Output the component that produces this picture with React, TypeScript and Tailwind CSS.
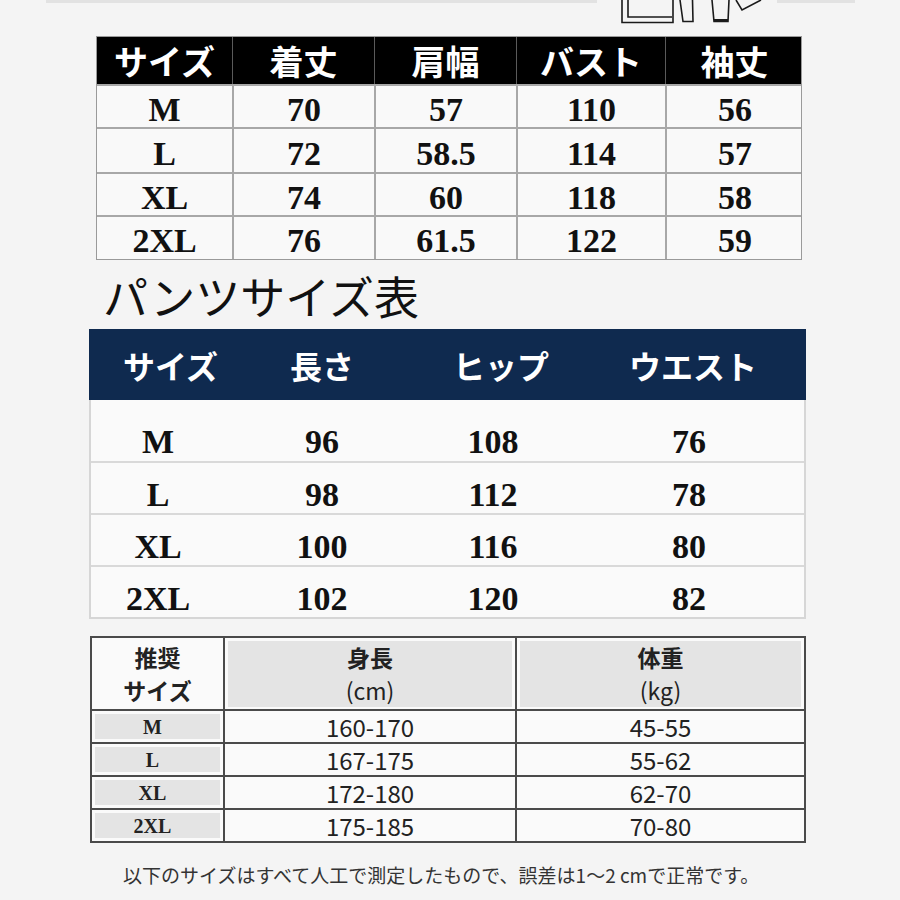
import type { FC } from "react";

const gothic = { fontFamily: '"Noto Sans CJK JP", "Noto Sans", sans-serif' };
const serif = { fontFamily: '"Liberation Serif", "DejaVu Serif", serif' };

const topHeaders = ["サイズ", "着丈", "肩幅", "バスト", "袖丈"];
const topRows = [
	["M", "70", "57", "110", "56"],
	["L", "72", "58.5", "114", "57"],
	["XL", "74", "60", "118", "58"],
	["2XL", "76", "61.5", "122", "59"],
];
const topHeights = ["h-[43px]", "h-[45px]", "h-[43px]", "h-[44px]"];

const pantsHeaders = ["サイズ", "長さ", "ヒップ", "ウエスト"];
const pantsRows = [
	["M", "96", "108", "76"],
	["L", "98", "112", "78"],
	["XL", "100", "116", "80"],
	["2XL", "102", "120", "82"],
];

const recRows = [
	["M", "160-170", "45-55"],
	["L", "167-175", "55-62"],
	["XL", "172-180", "62-70"],
	["2XL", "175-185", "70-80"],
];

const ClothesIcon: FC = () => (
	<svg width="180" height="36" viewBox="0 0 180 36" fill="none" stroke="#1a1a1a" strokeWidth="1.6">
		<path d="M25 0 V22.5 H76 V0" />
		<path d="M31 0 V17 H75" />
		<path d="M83 0 L86 21.5 H96 L95.5 0" />
		<path d="M115 0 L117 21.5 H131 L132 0" />
		<path d="M117 20.5 H131" strokeWidth="3" />
		<path d="M139 0 L145 10 L164 0" />
	</svg>
);

const TopTable: FC = () => (
	<div className="ml-[96px] w-[706px] border border-[#9a9a9a] bg-[#f9f9f9]">
		<div className="grid grid-cols-[135px_142px_142px_149px_138px] h-[47px] bg-black">
			{topHeaders.map((h, i) => (
				<div
					key={h}
					className={`flex items-center justify-center text-white text-[34px] font-bold leading-none ${i > 0 ? "border-l border-[#5a5a5a]" : ""}`}
					style={gothic}
				>
					{h}
				</div>
			))}
		</div>
		{topRows.map((row, r) => (
			<div
				key={row[0]}
				className={`grid grid-cols-[135px_142px_142px_149px_138px] border-t-2 border-[#a8a8a8] ${topHeights[r]}`}
			>
				{row.map((c, i) => (
					<div
						key={i}
						className={`flex items-center justify-center pt-[6px] text-[34px] font-bold leading-none text-[#111] ${i > 0 ? "border-l-2 border-[#a8a8a8]" : ""}`}
						style={serif}
					>
						{c}
					</div>
				))}
			</div>
		))}
	</div>
);

const PantsTable: FC = () => (
	<div className="ml-[89px] w-[717px]">
		<div className="grid grid-cols-[201px_163px_176px_1fr] h-[71px] bg-[#0f2a4f] items-center">
			{pantsHeaders.map((h, i) => (
				<div
					key={h}
					className={`text-white text-[32px] font-bold leading-none ${i === 0 ? "pl-[34px]" : ""}`}
					style={gothic}
				>
					{h}
				</div>
			))}
		</div>
		<div className="border-x-2 border-b-2 border-[#d6d6d6] bg-[#fafafa]">
			{pantsRows.map((row, r) => (
				<div
					key={row[0]}
					className={`grid grid-cols-[134px_194px_148px_1fr] ${r === 0 ? "h-[61px] pt-[23px]" : "h-[52px] pt-[14px] border-t-2 border-[#d9d9d9]"}`}
				>
					{row.map((c, i) => (
						<div
							key={i}
							className={`flex items-center justify-center text-[34px] font-bold leading-none text-[#111] ${i === 3 ? "pl-[7px]" : ""}`}
							style={serif}
						>
							{c}
						</div>
					))}
				</div>
			))}
		</div>
	</div>
);

const RecTable: FC = () => (
	<div className="mt-[17px] ml-[90px] w-[716px] border-2 border-[#4a4a4a] bg-[#fafafa]">
		<div className="grid grid-cols-[131px_292px_1fr] h-[71px]">
			<div className="flex flex-col items-center justify-center text-[23px] font-bold leading-[33px] text-[#222]" style={gothic}>
				<span>推奨</span>
				<span>サイズ</span>
			</div>
			<div className="border-l-2 border-[#4a4a4a] p-[3px]">
				<div className="h-full bg-[#e4e4e4] flex flex-col items-center justify-center text-[23px] leading-[33px] text-[#222]" style={gothic}>
					<span className="font-bold">身長</span>
					<span>(cm)</span>
				</div>
			</div>
			<div className="border-l-2 border-[#4a4a4a] p-[3px]">
				<div className="h-full bg-[#e4e4e4] flex flex-col items-center justify-center text-[23px] leading-[33px] text-[#222]" style={gothic}>
					<span className="font-bold">体重</span>
					<span>(kg)</span>
				</div>
			</div>
		</div>
		{recRows.map((row) => (
			<div key={row[0]} className="grid grid-cols-[131px_292px_1fr] h-[33px] border-t-2 border-[#4a4a4a]">
				<div className="p-[3px]">
					<div className="h-full bg-[#e4e4e4] flex items-center justify-center pr-[10px] text-[20px] font-bold leading-none text-[#222]" style={serif}>
						{row[0]}
					</div>
				</div>
				<div className="border-l-2 border-[#4a4a4a] flex items-center justify-center text-[24px] leading-none text-[#222]" style={gothic}>
					{row[1]}
				</div>
				<div className="border-l-2 border-[#4a4a4a] flex items-center justify-center text-[24px] leading-none text-[#222]" style={gothic}>
					{row[2]}
				</div>
			</div>
		))}
	</div>
);

export default function App() {
	return (
		<div className="w-[900px] h-[900px] overflow-hidden bg-[#f4f4f4]">
			<div className="flex items-start h-[36px]">
				<div className="w-[46px]" />
				<div className="w-[551px] h-[3px] bg-[#e2e2e2]" />
				<ClothesIcon />
				<div className="w-[78px] h-[3px] bg-[#e2e2e2]" />
			</div>
			<TopTable />
			<div className="h-[69px] flex items-center pl-[103px] pt-[2px] text-[45px] leading-none text-[#111]" style={gothic}>
				パンツサイズ表
			</div>
			<PantsTable />
			<RecTable />
			<div className="h-[57px] flex items-center pl-[123px] pt-[5px] text-[19px] leading-none text-[#333]" style={gothic}>
				以下のサイズはすべて人工で測定したもので、誤差は1～2 cmで正常です。
			</div>
		</div>
	);
}
